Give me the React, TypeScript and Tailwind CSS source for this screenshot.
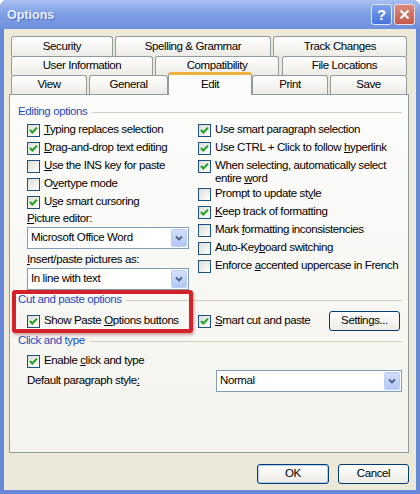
import type { ReactNode } from "react";

function Box({ checked }: { checked?: boolean }) {
  return (
    <span className="relative inline-block w-[13px] h-[13px] shrink-0 border border-[#1c5180] bg-linear-to-br from-[#dcdcd7] to-white">
      {checked && (
        <svg width="11" height="11" viewBox="0 0 11 11" className="absolute left-0 top-0">
          <polyline points="2,5 4.3,7.5 9,2.6" fill="none" stroke="#21a121" strokeWidth="2" />
        </svg>
      )}
    </span>
  );
}

function Check({ checked, children }: { checked?: boolean; children: ReactNode }) {
  return (
    <div className="flex items-center h-[18px]">
      <Box checked={checked} />
      <span className="ml-[4px] whitespace-nowrap">{children}</span>
    </div>
  );
}

function Header({ title }: { title: string }) {
  return (
    <div className="flex items-center h-[14px] text-[#1c4dbd]">
      <span className="whitespace-nowrap">{title}</span>
      <div className="flex-1 h-px bg-[#d0d0bf] ml-[5px]" />
    </div>
  );
}

function Select({ value, className }: { value: string; className: string }) {
  return (
    <div className={"flex items-center h-[22px] border border-[#7f9db9] bg-white " + className}>
      <span className="flex-1 pl-[3px] whitespace-nowrap">{value}</span>
      <span className="w-[16px] h-[18px] mr-[1px] flex items-center justify-center rounded-[2px] border border-[#bccdf5] bg-linear-to-b from-[#d3e0fb] to-[#b3c7f5]">
        <svg width="8" height="6" viewBox="0 0 8 6">
          <polyline points="1,1.5 4,4.5 7,1.5" fill="none" stroke="#4d6185" strokeWidth="1.8" />
        </svg>
      </span>
    </div>
  );
}

function Btn({ children, className }: { children: ReactNode; className: string }) {
  return (
    <div className={"h-[20px] flex items-center justify-center rounded-[3px] border border-[#003c74] bg-linear-to-b from-white to-[#ecebe6] " + className}>
      {children}
    </div>
  );
}

const tab = "h-full flex items-center justify-center border border-b-0 border-[#919b9c] rounded-t-[3px] bg-linear-to-b from-white to-[#ecebe6]";

export default function App() {
  return (
    <div className="w-[420px] h-[494px] flex flex-col rounded-t-[7px] bg-[#6788d9] font-['Liberation_Sans',Arial,sans-serif] text-[11.5px] tracking-[-0.4px] text-black">
      {/* title bar */}
      <div className="h-[29px] flex items-center pl-[7px] pr-[5px] rounded-t-[7px] bg-linear-to-b from-[#a9c0f2] via-[#7c9de3] to-[#6f91dd]">
        <span className="flex-1 pt-[1px] text-[12.5px] font-bold tracking-normal text-[#e8eef9] [text-shadow:1px_1px_0_#4f70c8]">Options</span>
        <div className="w-[21px] h-[21px] mr-[2px] flex items-center justify-center rounded-[3px] border border-[#dfe7fa] bg-linear-to-b from-[#7ea2ee] to-[#4773dc] text-white font-bold text-[15px] leading-none">?</div>
        <div className="w-[21px] h-[21px] flex items-center justify-center rounded-[3px] border border-[#f3dcd8] bg-linear-to-b from-[#d98a80] to-[#c4594c]">
          <svg width="11" height="11" viewBox="0 0 11 11">
            <path d="M1.5 1.5 L9.5 9.5 M9.5 1.5 L1.5 9.5" stroke="white" strokeWidth="2.2" />
          </svg>
        </div>
      </div>

      {/* dialog body */}
      <div className="mx-[4px] h-[461px] bg-[#ece9d8] pt-[7px]">
        <div className="pl-[7px]">
          <div className="flex h-[20px]">
            <div className={tab + " w-[102px]"}>Security</div>
            <div className={tab + " w-[156px] ml-[2px]"}>Spelling &amp; Grammar</div>
            <div className={tab + " w-[134px] ml-[2px]"}>Track Changes</div>
          </div>
          <div className="flex h-[19px]">
            <div className={tab + " w-[142px]"}>User Information</div>
            <div className={tab + " w-[124px] ml-[2px]"}>Compatibility</div>
            <div className={tab + " w-[125px] ml-[3px]"}>File Locations</div>
          </div>
          <div className="flex items-end h-[19px]">
            <div className={tab + " w-[76px]"}>View</div>
            <div className={tab + " w-[79px] ml-[2px]"}>General</div>
            <div className="relative z-10 -mb-px w-[84px] h-[23px] flex items-center justify-center border-x border-[#919b9c] border-t-[3px] border-t-[#f0b13e] rounded-t-[3px] bg-[#fcfcfb]">Edit</div>
            <div className={tab + " w-[76px]"}>Print</div>
            <div className={tab + " w-[77px] ml-[2px]"}>Save</div>
          </div>
        </div>

        {/* tab panel */}
        <div className="relative ml-[5px] w-[400px] h-[359px] border border-[#919b9c] bg-linear-to-b from-[#fcfcfb] to-[#f4f3ee] pl-[8px] pr-[6px] pt-[10px]">
          <Header title="Editing options" />
          <div className="mt-[2px] flex">
            <div className="w-[180px] pl-[9px]">
              <Check checked><u>T</u>yping replaces selection</Check>
              <Check checked><u>D</u>rag-and-drop text editing</Check>
              <Check><u>U</u>se the INS key for paste</Check>
              <Check>O<u>v</u>ertype mode</Check>
              <Check checked>U<u>s</u>e smart cursoring</Check>
              <div className="h-[16px] flex items-center"><u>P</u>icture editor:</div>
              <Select value="Microsoft Office Word" className="w-[162px]" />
              <div className="mt-[3px] h-[16px] flex items-center"><u>I</u>nsert/paste pictures as:</div>
              <Select value="In line with text" className="w-[162px]" />
            </div>
            <div className="flex-1">
              <Check checked>Use smart para<u>g</u>raph selection</Check>
              <Check checked>Use CTRL + Click to follow <u>h</u>yperlink</Check>
              <div className="flex items-start h-[28px] pt-[3px]">
                <Box checked />
                <span className="ml-[4px] leading-[12.5px] -mt-px">
                  When selecting, automatically select
                  <br />
                  entire <u>w</u>ord
                </span>
              </div>
              <Check>Prompt to update st<u>y</u>le</Check>
              <Check checked><u>K</u>eep track of formatting</Check>
              <Check>Mark <u>f</u>ormatting inconsistencies</Check>
              <Check>Auto-Key<u>b</u>oard switching</Check>
              <Check>Enforce <u>a</u>ccented uppercase in French</Check>
            </div>
          </div>

          <div className="mt-[3px]">
            <Header title="Cut and paste options" />
          </div>
          <div className="mt-[3px] h-[22px] flex items-center">
            <div className="w-[180px] pl-[9px]">
              <Check checked>Show Paste <u>O</u>ptions buttons</Check>
            </div>
            <Check checked><u>S</u>mart cut and paste</Check>
            <Btn className="ml-auto mr-[2px] w-[71px]">Settin<u>g</u>s...</Btn>
          </div>

          <div className="mt-[2px]">
            <Header title="Click and type" />
          </div>
          <div className="mt-[4px] pl-[9px]">
            <Check checked>Enable <u>c</u>lick and type</Check>
          </div>
          <div className="flex items-center h-[22px] pl-[9px]">
            <span className="flex-1">Default paragraph style<u>:</u></span>
            <Select value="Normal" className="w-[186px]" />
          </div>

          {/* annotation box */}
          <div className="absolute left-[2px] top-[195px] w-[181px] h-[43px] rounded-[3px] border-[4px] border-[#d3222a] shadow-[1px_2px_3px_rgba(120,0,0,0.35)]" />
        </div>

        <div className="mt-[11px] flex justify-end gap-[9px] pr-[7px]">
          <Btn className="w-[72px] shadow-[inset_0_0_0_1px_#b4cdf2]">OK</Btn>
          <Btn className="w-[71px]">Cancel</Btn>
        </div>
      </div>
    </div>
  );
}
